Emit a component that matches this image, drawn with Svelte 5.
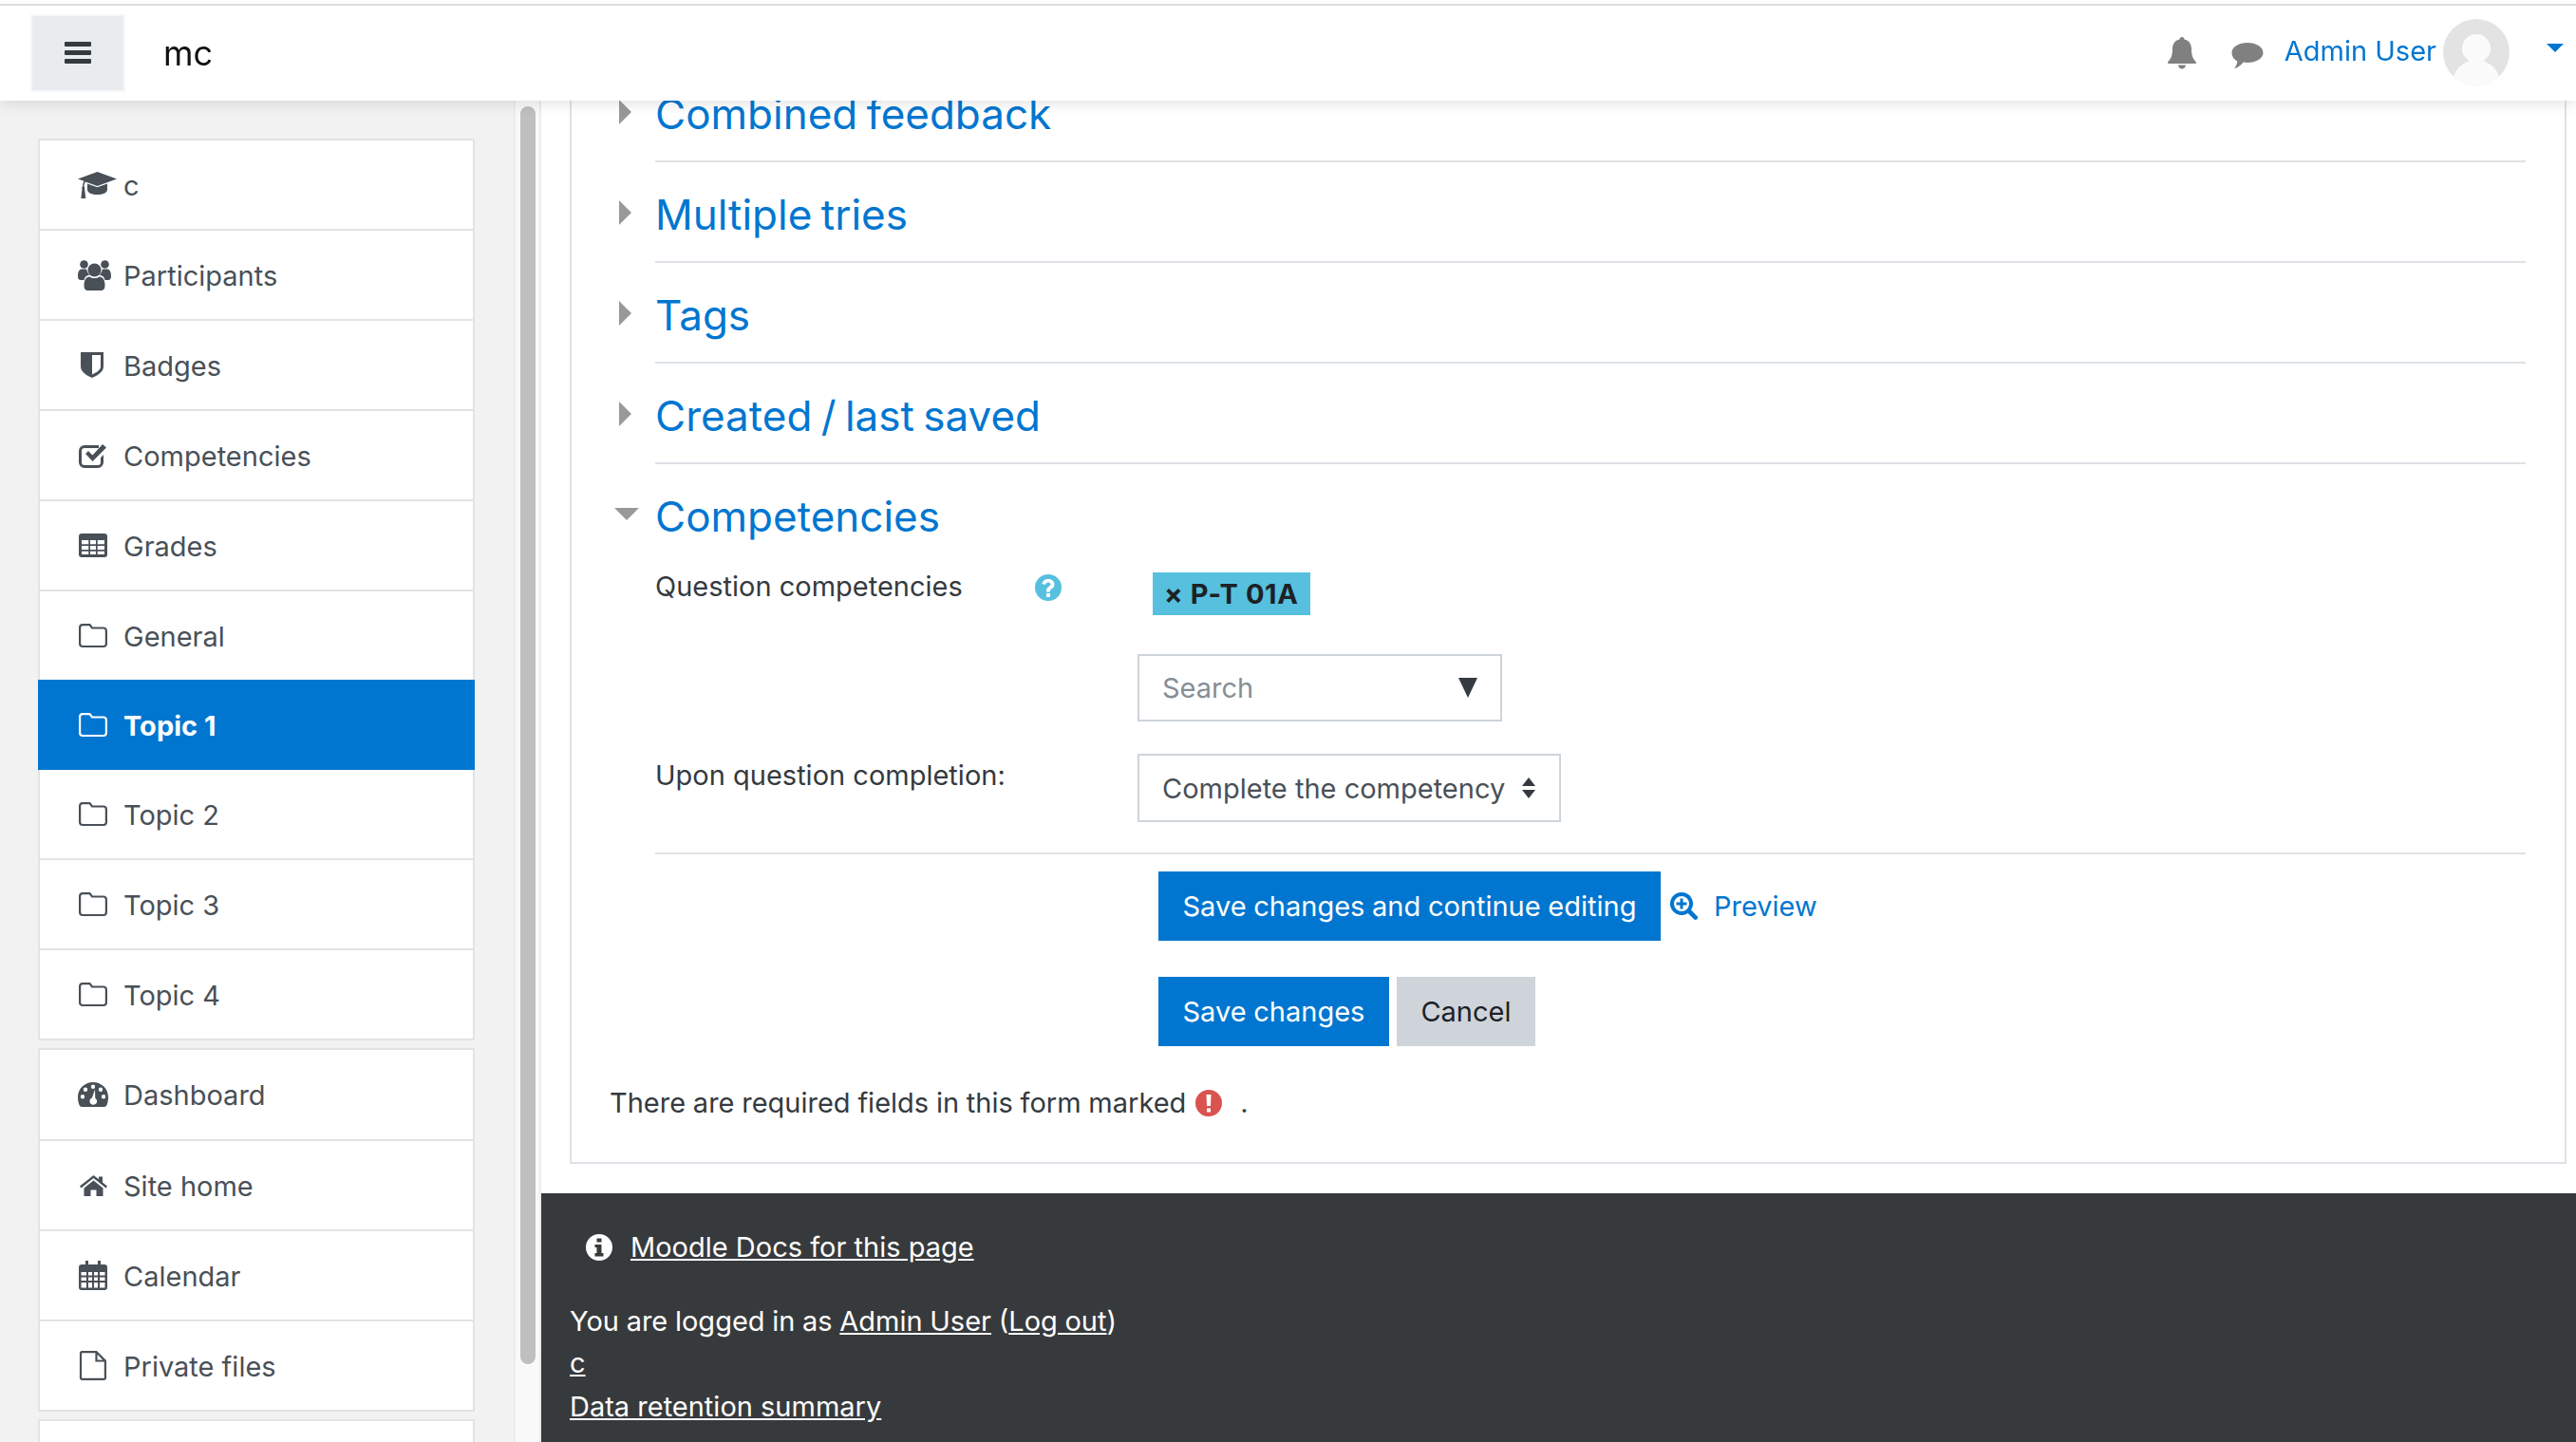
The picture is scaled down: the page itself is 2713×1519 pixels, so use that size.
<script>
  // each icon is drawn at its real size in the rail, so no viewBox padding to account for
  const icons = {
    cap: { w: 41, h: 28, body: '<path d="M20.500 0 41 7.500 20.500 15 8 10.500c-1 1.500-1.500 3-1.500 5 .8.500 1 1.500.6 2.300L8.300 28H3.300l1.200-10.200c-.5-.8-.3-1.800.500-2.300 0-2.300.5-4.200 1.500-5.800L0 7.500z"/><path d="M10 12.500l10.500 3.800L31 12.500v6.500c0 3-5 5-10.500 5S10 22 10 19z"/>' },
    users: { w: 35, h: 32, body: '<circle cx="17.500" cy="10.500" r="7"/><circle cx="6.500" cy="4.500" r="4.300"/><circle cx="28.500" cy="4.500" r="4.300"/><path d="M0 17c0-5 1.500-7.500 4.500-7.500H9c.5 2.500 2 5 3.500 6-3.500.5-5.500 2.500-6 5.500H3c-2 0-3-1.500-3-4zM35 17c0-5-1.500-7.500-4.500-7.500H26c-.5 2.500-2 5-3.500 6 3.500.5 5.500 2.500 6 5.500H32c2 0 3-1.500 3-4zM6.500 27c0-6 2-9.500 6-9.500 1.500 1 3 1.500 5 1.500s3.500-.5 5-1.500c4 0 6 3.500 6 9.500 0 3-1.500 5-4 5h-14c-2.500 0-4-2-4-5z"/>', dx: 0 },
    shield: { w: 24, h: 27, dx: 3, body: '<path fill-rule="evenodd" d="M0 0h24v15c0 6-6.500 9.500-12 12C6.500 24.500 0 21 0 15zM12 3v20.500c4.500-2.200 9-4.500 9-8.500V3z"/>' },
    check: { w: 30, h: 26, dx: 1, body: '<path d="M6 2h15v3H6a3 3 0 0 0-3 3v12a3 3 0 0 0 3 3h14a3 3 0 0 0 3-3v-5l3-3v8a6 6 0 0 1-6 6H6a6 6 0 0 1-6-6V8a6 6 0 0 1 6-6z"/><path d="M7 11l3-3 4.500 4.500L25 1l4 3.500-14.500 14.500z"/>' },
    grid: { w: 30, h: 25, dx: 1, body: '<path fill-rule="evenodd" d="M3 0h24a3 3 0 0 1 3 3v19a3 3 0 0 1-3 3H3a3 3 0 0 1-3-3V3a3 3 0 0 1 3-3zm0 7v4.300h7.300V7zm9 0v4.300h6V7zm7.700 0v4.300H27V7zM3 13v4h7.300v-4zm9 0v4h6v-4zm7.700 0v4H27v-4zM3 18.700V22h7.300v-3.300zm9 0V22h6v-3.300zm7.700 0V22H27v-3.300z"/>' },
    folder: { w: 30, h: 25, dx: 1, body: '<path fill="none" stroke="currentColor" stroke-width="2.200" d="M1.100 4V21a3 3 0 0 0 3 3h21.800a3 3 0 0 0 3-3V7.500a3 3 0 0 0-3-3H14L11.500 1.100H4A3 3 0 0 0 1.100 4z"/>' },
    gauge: { w: 32, h: 26, body: '<path fill-rule="evenodd" d="M16 0C7 0 0 7 0 15.500c0 3.500.5 6 1.500 8.500.5 1.300 1.500 2 2.800 2h23.400c1.300 0 2.300-.7 2.800-2 1-2.500 1.500-5 1.500-8.500C32 7 25 0 16 0zm0 2.500a2.200 2.200 0 1 1 0 4.400 2.200 2.200 0 0 1 0-4.400zM8 5.500a2.200 2.200 0 1 1 0 4.400 2.200 2.200 0 0 1 0-4.400zm16 0a2.200 2.200 0 1 1 0 4.400 2.200 2.200 0 0 1 0-4.400zM5 13a2.200 2.200 0 1 1 0 4.400A2.200 2.200 0 0 1 5 13zm22 0a2.200 2.200 0 1 1 0 4.400 2.200 2.200 0 0 1 0-4.400zM18 7.500l.3 9.500c1.500 1 2.200 2.500 1.700 4.200-.6 2-3 3-5 2.300-2.200-.8-3-3-2.300-5 .4-1 1.200-1.700 2.200-2.100z"/>' },
    home: { w: 29, h: 22, dx: 2, body: '<path d="M14.500 0 0 11.500 1.500 13.500 14.500 3l13 10.500L29 11.500 24 7.500V1.500h-4V4.300zM4.500 13.500 14.500 5.400l10 8.100V22H17.500v-6.500h-6V22H4.500z"/>' },
    calendar: { w: 30, h: 31, dx: 1, body: '<path fill-rule="evenodd" d="M7 0h3v4h10V0h3v4h4a3 3 0 0 1 3 3v21a3 3 0 0 1-3 3H3a3 3 0 0 1-3-3V7a3 3 0 0 1 3-3h4zM2.500 12v3.500h5.500V12zm7.500 0v3.500h4V12zm6 0v3.500h4V12zm6 0v3.500h5.500V12zM2.500 17.500V21h5.500v-3.500zm7.500 0V21h4v-3.500zm6 0V21h4v-3.500zm6 0V21h5.500v-3.500zM2.500 23v5.500h5.500V23zm7.500 0v5.500h4V23zm6 0v5.500h4V23zm6 0v5.500h5.500V23z"/>' },
    file: { w: 28, h: 31, dx: 2, body: '<path fill="none" stroke="currentColor" stroke-width="2.200" d="M2.500 1.100h15l9.400 9.400V28.400a1.500 1.500 0 0 1-1.500 1.500H2.500a1.500 1.500 0 0 1-1.500-1.500V2.600a1.500 1.500 0 0 1 1.500-1.500zM17.500 1.100v9.400h9.400"/>' }
  };

  const topNav = [
    { label: "c", icon: "cap" },
    { label: "Participants", icon: "users" },
    { label: "Badges", icon: "shield" },
    { label: "Competencies", icon: "check" },
    { label: "Grades", icon: "grid" },
    { label: "General", icon: "folder" },
    { label: "Topic 1", icon: "folder", active: true },
    { label: "Topic 2", icon: "folder" },
    { label: "Topic 3", icon: "folder" },
    { label: "Topic 4", icon: "folder" }
  ];
  const siteNav = [
    { label: "Dashboard", icon: "gauge" },
    { label: "Site home", icon: "home" },
    { label: "Calendar", icon: "calendar" },
    { label: "Private files", icon: "file" }
  ];
  const sections = ["Combined feedback", "Multiple tries", "Tags", "Created / last saved"];
</script>

{#snippet navGroup(items)}
  <ul class="nav-group">
    {#each items as item}
      <li class:active={item.active}>
        <span class="icon-slot">
          <svg
            viewBox="0 0 {icons[item.icon].w} {icons[item.icon].h}"
            width={icons[item.icon].w}
            height={icons[item.icon].h}
            style:margin-left="{icons[item.icon].dx ?? 0}px"
          >{@html icons[item.icon].body}</svg>
        </span>
        <span class="nav-label">{item.label}</span>
      </li>
    {/each}
  </ul>
{/snippet}

<header class="navbar">
  <button class="burger" aria-label="menu">
    <svg viewBox="0 0 28 24" width="28" height="24"><path d="M1 0h26a1 1 0 0 1 1 1v3a1 1 0 0 1-1 1H1a1 1 0 0 1-1-1V1a1 1 0 0 1 1-1zm0 9h26a1 1 0 0 1 1 1v3a1 1 0 0 1-1 1H1a1 1 0 0 1-1-1v-3a1 1 0 0 1 1-1zm0 9h26a1 1 0 0 1 1 1v3a1 1 0 0 1-1 1H1a1 1 0 0 1-1-1v-3a1 1 0 0 1 1-1z" fill="#343a40"/></svg>
  </button>
  <span class="brand">mc</span>
  <div class="user">
    <svg class="bell" viewBox="0 0 30 34" width="30" height="34"><path d="M15 0c1.500 0 2.500 1 2.500 2.500 5 1 7.500 5 7.500 10 0 8 2 10.500 5 14 0 1-.5 1.500-1.500 1.500h-27C.5 28 0 27.500 0 26.500c3-3.500 5-6 5-14 0-5 2.500-9 7.500-10C12.500 1 13.500 0 15 0zM11 29.500c.3 2.500 2 4 4 4s3.700-1.500 4-4z" fill="#808080"/></svg>
    <svg class="comment" viewBox="0 0 34 28" width="34" height="28"><path d="M17 0c9 0 16.500 4.500 16.500 10.500S26 21 17 21c-1.500 0-3-.1-4.300-.4C10.500 23.500 6 27 3 27.500c1.500-2 3-4.500 3.300-8C2.500 17.500.5 14.500.5 10.500.5 4.500 8 0 17 0z" fill="#808080"/></svg>
    <span class="user-name">Admin User</span>
    <svg class="avatar" viewBox="0 0 70 70" width="70" height="70">
      <clipPath id="avatar-clip"><circle cx="35" cy="35" r="35"/></clipPath>
      <g clip-path="url(#avatar-clip)">
        <rect width="70" height="70" fill="#e3e3e3"/>
        <circle cx="35" cy="31" r="15" fill="#fbfbfb"/>
        <ellipse cx="35" cy="68" rx="25" ry="25" fill="#fbfbfb"/>
      </g>
    </svg>
    <span class="caret"></span>
  </div>
</header>

<div class="shell">
  <aside class="sidebar">
    {@render navGroup(topNav)}
    {@render navGroup(siteNav)}
    <ul class="nav-group"><li></li></ul>
  </aside>
  <div class="track"><div class="thumb"></div></div>

  <main class="main">
    <div class="card">
      {#each sections as title}
        <div class="section">
          <span class="arrow-right"></span>
          <h3>{title}</h3>
        </div>
      {/each}

      <div class="section open">
        <span class="arrow-down"></span>
        <h3>Competencies</h3>
      </div>

      <div class="field">
        <div class="label">
          Question competencies
          <svg class="help" viewBox="0 0 28 28" width="28" height="28"><path fill-rule="evenodd" d="M14 0a14 14 0 1 1 0 28 14 14 0 0 1 0-28zM12 20v4h4v-4zM14 5c-3.500 0-6 2-6.500 5l3.500 1c.3-1.500 1.300-2.500 3-2.500 1.500 0 2.500.8 2.500 2 0 1-.7 1.600-2 2.500-1.500 1-2.500 2-2.500 4.500v1h4v-.5c0-1.300.5-1.800 1.800-2.700 1.700-1.100 2.700-2.500 2.700-4.700C20.500 7 17.500 5 14 5z" fill="#56c0de"/></svg>
        </div>
        <div class="value">
          <span class="tag">× P-T 01A</span>
          <div class="combo search">
            <span>Search</span>
            <span class="combo-arrow"></span>
          </div>
        </div>
      </div>

      <div class="field second">
        <div class="label">Upon question completion:</div>
        <div class="value">
          <div class="combo select">
            <span>Complete the competency</span>
            <svg viewBox="0 0 16 24" width="16" height="24"><path d="M8 1l7 9H1zM8 23l7-9H1z" fill="#343a40"/></svg>
          </div>
        </div>
      </div>

      <div class="divider"></div>

      <div class="buttons">
        <button class="btn primary">Save changes and continue editing</button>
        <span class="preview">
          <svg viewBox="0 0 30 32" width="30" height="32"><path fill-rule="evenodd" d="M13 1a12 12 0 0 1 10 18.600l6.300 6.300a2.300 2.300 0 0 1-3.300 3.300l-6.300-6.300A12 12 0 1 1 13 1zm0 4a8 8 0 1 0 0 16 8 8 0 0 0 0-16zm-1.500 2.500h3v4h4v3h-4v4h-3v-4h-4v-3h4z" fill="#0176d0"/></svg>
          Preview
        </span>
      </div>
      <div class="buttons last">
        <button class="btn primary">Save changes</button>
        <button class="btn secondary">Cancel</button>
      </div>

      <p class="required">
        <span class="required-text">There are required fields in this form marked</span>
        <svg viewBox="0 0 28 28" width="28" height="28"><path fill-rule="evenodd" d="M14 0a14 14 0 1 1 0 28 14 14 0 0 1 0-28zM11.500 5l.5 12h4l.5-12zM12 19.500v4h4v-4z" fill="#d9534f"/></svg>
        <span class="dot">.</span>
      </p>
    </div>

    <footer class="footer">
      <div class="docs">
        <svg viewBox="0 0 28 28" width="28" height="28"><path fill-rule="evenodd" d="M14 0a14 14 0 1 1 0 28 14 14 0 0 1 0-28zM11.500 4.500v4h5v-4zM9.500 11v3h2v6h-2v3.500h9V20h-2v-9z" fill="#fff"/></svg>
        <a href="#docs">Moodle Docs for this page</a>
      </div>
      <div class="login">You are logged in as <a href="#user">Admin User</a> (<a href="#logout">Log out</a>)</div>
      <div class="foot-link first"><a href="#c">c</a></div>
      <div class="foot-link"><a href="#retention">Data retention summary</a></div>
    </footer>
  </main>
</div>

<style>
  :global(body) {
    font-family: Inter, "Liberation Sans", sans-serif;
    background: #fff;
    overflow: hidden;
  }

  .navbar {
    position: fixed;
    top: 0;
    left: 0;
    right: 0;
    height: 106px;
    box-sizing: border-box;
    padding-top: 6px;
    display: flex;
    align-items: center;
    background: linear-gradient(#fff 4px, #dedede 4px, #dedede 6px, #fff 6px);
    box-shadow: 0 4px 14px rgba(0, 0, 0, 0.1);
    z-index: 10;
  }
  .burger {
    width: 96px;
    height: 78px;
    margin: 0 0 0 34px;
    padding: 0;
    border: none;
    background: #e9ecef;
    outline: 2px solid #f5f7f8;
    display: flex;
    align-items: center;
    justify-content: center;
  }
  .brand {
    margin-left: 42px;
    font-size: 36px;
    color: #111;
  }
  .user {
    margin-left: auto;
    display: flex;
    align-items: center;
    color: #0176d0;
    font-size: 29px;
  }
  .bell { margin-right: 37px; margin-top: -1px; }
  .comment { margin-right: 22px; margin-top: 6px; }
  .user-name { margin-top: -6px; }
  .avatar { margin: -2px 0 0 7px; }
  .caret {
    width: 0;
    height: 0;
    margin: -12px 13px 0 39px;
    border: 9px solid transparent;
    border-top-color: #0176d0;
    border-bottom: none;
  }

  .shell {
    display: flex;
    height: 1519px;
    overflow: hidden;
  }
  .sidebar {
    width: 541px;
    flex: none;
    box-sizing: border-box;
    padding: 146px 41px 0 40px;
    background: #f2f2f2;
    display: flex;
    flex-direction: column;
    gap: 8px;
    overflow: hidden;
  }
  .nav-group {
    list-style: none;
    margin: 0;
    padding: 0;
    background: #fff;
    border: 2px solid #e3e3e3;
    color: #495057;
    font-size: 29px;
    flex: none;
  }
  .nav-group li {
    height: 95px;
    box-sizing: border-box;
    display: flex;
    align-items: center;
    padding-left: 40px;
    border-top: 2px solid #e3e3e3;
  }
  .nav-group li:first-child { border-top: none; height: 93px; }
  .nav-group + .nav-group li:first-child { height: 94px; }
  .nav-group li.active {
    background: #0176d0;
    color: #fff;
    font-weight: 700;
    margin: 0 -2px;
    padding-left: 42px;
    border-top: none;
    position: relative;
  }
  .nav-group li.active + li { height: 93px; border-top: none; }
  .icon-slot {
    width: 48px;
    flex: none;
    display: flex;
    align-items: center;
  }
  .icon-slot svg {
    fill: currentColor;
    flex: none;
    overflow: visible;
  }
  .nav-label { padding-top: 1px; }

  .track {
    width: 29px;
    flex: none;
    box-sizing: border-box;
    background: #f9f9f9;
    border-left: 2px solid #ececec;
    border-right: 2px solid #ececec;
    padding: 112px 5px 0;
  }
  .thumb {
    width: 16px;
    height: 1325px;
    background: #bfbfbf;
    border-radius: 8px;
  }

  .main {
    flex: 1;
    min-width: 0;
    font-size: 29px;
    color: #343a40;
  }
  .card {
    margin: 0 10px 0 30px;
    box-sizing: border-box;
    border: 2px solid #dee2e6;
    border-top: none;
    padding: 65px 0 39px 40px;
  }
  .section {
    display: flex;
    align-items: center;
    height: 106px;
  }
  .section h3 {
    flex: 1;
    margin: 0 41px 0 0;
    height: 100%;
    box-sizing: border-box;
    padding-top: 5px;
    border-bottom: 2px solid #dee2e6;
    display: flex;
    align-items: center;
    font-size: 44px;
    font-weight: 400;
    word-spacing: -3px;
    color: #0176d0;
  }
  .section.open h3 { border-bottom: none; padding-top: 4px; }
  .arrow-right, .arrow-down {
    width: 48px;
    flex: none;
    height: 0;
    margin-top: -1px;
  }
  .arrow-right::before, .arrow-down::before {
    content: "";
    display: block;
    width: 0;
    height: 0;
  }
  .arrow-right::before {
    margin-left: 10px;
    margin-top: -13px;
    border-left: 13px solid #999;
    border-top: 13px solid transparent;
    border-bottom: 13px solid transparent;
  }
  .arrow-down::before {
    margin-left: 5px;
    margin-top: -7px;
    border-top: 13px solid #999;
    border-left: 13px solid transparent;
    border-right: 13px solid transparent;
  }

  .field {
    display: grid;
    grid-template-columns: 508px 1fr;
    margin-left: 48px;
  }
  .field.second { margin-top: 34px; }
  .label {
    display: flex;
    align-items: flex-start;
    line-height: 46px;
    color: #343a40;
    position: relative;
  }
  .help {
    position: absolute;
    left: 400px;
    top: 10px;
  }
  .value { display: flex; flex-direction: column; align-items: flex-start; }
  .tag {
    margin: 8px 0 0 16px;
    height: 45px;
    width: 166px;
    box-sizing: border-box;
    padding-left: 12px;
    background: #56c0de;
    color: #1d2125;
    font-weight: 700;
    font-size: 29px;
    display: flex;
    align-items: center;
    white-space: nowrap;
    letter-spacing: 0.6px;
  }
  .combo {
    box-sizing: border-box;
    border: 2px solid #ced4da;
    display: flex;
    align-items: center;
    justify-content: space-between;
    padding: 0 24px;
    background: #fff;
  }
  .search {
    margin-top: 41px;
    width: 384px;
    height: 71px;
    color: #868e96;
  }
  .combo-arrow {
    width: 0;
    height: 0;
    border-top: 21px solid #343a40;
    border-left: 10px solid transparent;
    border-right: 10px solid transparent;
  }
  .select {
    width: 446px;
    height: 72px;
    color: #495057;
    padding-right: 24px;
  }
  .divider {
    height: 2px;
    background: #dee2e6;
    margin: 32px 41px 0 48px;
  }
  .buttons {
    display: flex;
    align-items: center;
    margin: 18px 0 0 578px;
  }
  .buttons.last { margin-top: 38px; gap: 8px; }
  .btn {
    height: 73px;
    padding: 0 25.500px;
    border: none;
    font: inherit;
    word-spacing: -0.5px;
  }
  .primary { background: #0176d0; color: #fff; }
  .secondary { background: #ced4da; color: #1d2125; }
  .preview {
    display: flex;
    align-items: center;
    gap: 17px;
    margin-left: 9px;
    color: #0176d0;
  }
  .required {
    margin: 37px 0 0;
    line-height: 46px;
    display: flex;
    align-items: center;
    gap: 10px;
    color: #343a40;
  }
  .required-text { word-spacing: -0.4px; }
  .dot { margin-left: 9px; }

  .footer {
    margin-top: 31px;
    background: #373a3c;
    color: #fff;
    padding: 34px 30px 40px;
    height: 300px;
    box-sizing: border-box;
  }
  .footer a { color: #fff; text-decoration: underline; }
  .docs {
    display: flex;
    align-items: center;
    gap: 19px;
    padding-left: 17px;
    line-height: 46px;
  }
  .login { margin-top: 32px; line-height: 46px; word-spacing: -0.5px; }
  .foot-link { line-height: 46px; }
  .foot-link.first { margin-top: -2px; }
</style>
